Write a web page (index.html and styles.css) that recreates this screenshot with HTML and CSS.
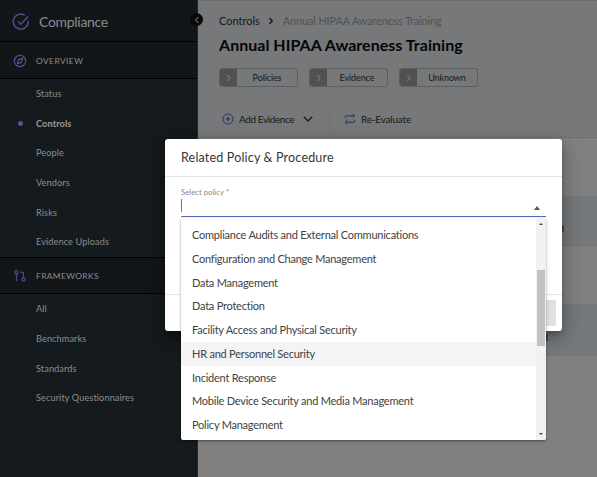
FILE: index.html
```html
<!DOCTYPE html>
<html lang="en">
<head>
<meta charset="utf-8">
<title>Compliance</title>
<link rel="stylesheet" href="styles.css">
</head>
<body>
<div class="app">
  <nav class="sidebar">
    <div class="brand">
      <svg class="brand-icon" viewBox="0 0 18 18"><path d="M16.2 7.6A7.5 7.5 0 1 1 12.8 2.3M6 8.3l2.8 2.9 7.3-7.7"/></svg>
      <span>Compliance</span>
    </div>
    <div class="section">
      <svg class="section-icon" viewBox="0 0 14 14"><circle cx="7" cy="7" r="5.7"/><path d="M9.6 4.4 8.4 8.4 4.4 9.6 5.6 5.6z"/></svg>
      <span>OVERVIEW</span>
    </div>
    <ul class="nav">
      <li>Status</li>
      <li class="active">Controls</li>
      <li>People</li>
      <li>Vendors</li>
      <li>Risks</li>
      <li>Evidence Uploads</li>
    </ul>
    <div class="section frameworks">
      <svg class="section-icon" viewBox="0 0 14 14"><circle cx="3.5" cy="3.2" r="1.6"/><path d="M3.5 4.8v7.4M7.2 3.2h2.2q1 0 1 1v4.6"/><circle cx="10.4" cy="10.5" r="1.6"/></svg>
      <span>FRAMEWORKS</span>
    </div>
    <ul class="nav">
      <li>All</li>
      <li>Benchmarks</li>
      <li>Standards</li>
      <li>Security Questionnaires</li>
    </ul>
  </nav>

  <main class="main">
    <header class="page-head">
      <div class="crumbs">
        <span>Controls</span>
        <svg class="crumb-arrow" viewBox="0 0 6 8"><path d="M1.3 1l3 3-3 3"/></svg>
        <span class="current">Annual HIPAA Awareness Training</span>
      </div>
      <h1>Annual HIPAA Awareness Training</h1>
      <div class="chips">
        <div class="chip"><i><svg viewBox="0 0 6 8"><path d="M1.3 1l3 3-3 3"/></svg></i><span>Policies</span></div>
        <div class="chip"><i><svg viewBox="0 0 6 8"><path d="M1.3 1l3 3-3 3"/></svg></i><span>Evidence</span></div>
        <div class="chip"><i><svg viewBox="0 0 6 8"><path d="M1.3 1l3 3-3 3"/></svg></i><span>Unknown</span></div>
      </div>
    </header>
    <div class="toolbar">
      <div class="tool add">
        <svg class="plus" viewBox="0 0 12 12"><circle cx="6" cy="6" r="5"/><path d="M6 3.6v4.8M3.6 6h4.8"/></svg>
        <span>Add Evidence</span>
        <svg class="caret" viewBox="0 0 10 6"><path d="M.8.8 5 5 9.200.8"/></svg>
      </div>
      <div class="tool again">
        <svg class="repeat" viewBox="0 0 12 12"><path d="M1.300 5.200V4q0-1.200 1.200-1.200h8M8.500.8l2.100 2-2.100 2M10.700 6.800V8q0 1.200-1.200 1.200h-8M3.500 7.200l-2.100 2 2.100 2"/></svg>
        <span>Re-Evaluate</span>
      </div>
    </div>
    <div class="rows">
      <div class="row-a"></div>
      <div class="row-b">d</div>
      <div class="row-c"></div>
      <div class="row-d">d</div>
    </div>
  </main>
</div>

<button class="collapse" aria-label="Collapse"><svg viewBox="0 0 6 8"><path d="M4.500 1l-3 3 3 3"/></svg></button>

<section class="dialog">
  <h2>Related Policy &amp; Procedure</h2>
  <div class="body">
    <label>Select policy *</label>
    <div class="field"><span class="cursor"></span><span class="up"></span></div>
  </div>
  <footer><button class="save" aria-label="Save" disabled></button></footer>
</section>

<div class="menu">
  <ul>
    <li>Compliance Audits and External Communications</li>
    <li>Configuration and Change Management</li>
    <li>Data Management</li>
    <li>Data Protection</li>
    <li>Facility Access and Physical Security</li>
    <li class="hover">HR and Personnel Security</li>
    <li>Incident Response</li>
    <li>Mobile Device Security and Media Management</li>
    <li>Policy Management</li>
  </ul>
  <div class="scroll"><b class="s-up"></b><div class="thumb"></div><b class="s-down"></b></div>
</div>
</body>
</html>
```

FILE: styles.css
```css
* { box-sizing: border-box; }
body { margin: 0; width: 597px; height: 477px; overflow: hidden; font-family: Lato, "Liberation Sans", sans-serif; }
ul { list-style: none; margin: 0; padding: 0; }
svg { fill: none; stroke: currentColor; flex: none; }
.app { display: flex; height: 477px; }

.sidebar { width: 198px; flex: none; background: #141a1d; color: #8b8d8e; border-right: 1px solid #22282b; }
.brand { height: 42px; padding: 2px 0 0 12px; display: flex; align-items: center; gap: 9px; font-size: 14px; letter-spacing: -.3px; background: #121618; border-bottom: 1px solid #000; }
.brand-icon { width: 18px; height: 18px; color: #49528c; stroke-width: 1.5; }
.section { height: 37px; padding: 1px 0 0 13px; display: flex; align-items: center; gap: 9px; font-size: 8.4px; letter-spacing: .45px; background: #121618; border-bottom: 1px solid #000; }
.section-icon { width: 14px; height: 14px; color: #49528c; stroke-width: 1.2; }
.nav li { height: 29.7px; line-height: 30px; padding-left: 36px; font-size: 9.2px; letter-spacing: .09px; }
.nav .active { font-weight: 700; color: #999b9c; display: flex; align-items: center; padding-left: 18px; }
.nav .active::before { content: ""; width: 5px; height: 5px; border-radius: 50%; background: #51588f; margin-right: 13px; }
.frameworks { border-top: 1px solid #000; letter-spacing: .4px; }

.main { flex: 1; background: #808080; border-top: 1px solid #6b6c6e; min-width: 0; }
.page-head { height: 100px; background: #76787a; padding: 11px 0 0 21px; border-bottom: 1px solid #707274; }
.crumbs { display: flex; align-items: center; height: 17px; font-size: 11px; color: #17191b; }
.crumb-arrow { width: 6px; height: 8px; margin: 0 9px 0 8px; stroke-width: 1.4; }
.current { color: #505254; letter-spacing: -.17px; }
h1 { margin: 6px 0 0; font-size: 16px; line-height: 20px; font-weight: 700; letter-spacing: .03px; color: #050607; white-space: nowrap; }
.chips { display: flex; gap: 11px; margin-top: 13px; }
.chip { width: 79px; height: 19px; display: flex; border: 1px solid #5c5e60; border-radius: 3px; font-size: 9px; letter-spacing: -.1px; color: #18191b; overflow: hidden; }
.chip i { width: 17px; background: #505152; color: #898b8d; display: grid; place-items: center; }
.chip svg { width: 6px; height: 8px; }
.chip span { flex: 1; text-align: center; line-height: 17px; }
.toolbar { height: 37px; background: #76787a; display: flex; align-items: center; padding-left: 24px; border-bottom: 1px solid #6c6e70; }
.tool { display: flex; align-items: center; height: 25px; font-size: 10px; color: #17191b; }
.add { width: 108px; border-right: 1px solid #707274; letter-spacing: -.4px; }
.again { letter-spacing: -.2px; }
.plus { width: 12px; height: 12px; color: #293264; margin-right: 5px; }
.caret { width: 10px; height: 6px; margin-left: 9px; stroke-width: 1.4; }
.repeat { width: 12px; height: 12px; color: #293264; margin: 0 5px 0 14px; }
.row-a { height: 58px; }
.row-b { height: 50px; background: #75787a; border-bottom: 1px solid #6f7173; }
.row-c { height: 59px; border-bottom: 1px solid #777; }
.row-d { height: 51px; background: #75787a; }
.row-b, .row-d { padding-top: 26px; font-size: 10px; line-height: 12px; text-align: right; color: #17191b; }
.row-b { padding-right: 33px; }
.row-d { padding-right: 49px; }

.collapse { position: absolute; left: 190px; top: 13px; width: 13px; height: 13px; padding: 0; border: 0; border-radius: 50%; background: #08090a; color: #939597; display: grid; place-items: center; }
.collapse svg { width: 6px; height: 8px; }

.dialog { position: absolute; left: 165px; top: 139px; width: 397px; height: 192px; background: #fff; border-radius: 3px; box-shadow: 0 4px 6px -2px rgba(0,0,0,.3), 0 9px 16px 1px rgba(0,0,0,.15), 0 3px 19px 3px rgba(0,0,0,.12); display: flex; flex-direction: column; }
h2 { margin: 0; height: 38px; padding-left: 16px; line-height: 37px; font-size: 12.5px; font-weight: 400; color: #343638; border-bottom: 1px solid #e4e5e6; letter-spacing: .18px; }
.body { flex: 1; padding: 10px 16px 8px; }
label { display: block; font-size: 7.5px; line-height: 12px; letter-spacing: .12px; color: #858585; }
.field { height: 18px; border-bottom: 1px solid #5b6bbd; display: flex; align-items: center; justify-content: space-between; }
.cursor { width: 1px; height: 13px; margin-bottom: 4px; background: #777; }
.up { border: 3.5px solid transparent; border-top: 0; border-bottom: 4px solid #555; margin: 0 6px 0 0; }
footer { height: 37px; border-top: 1px solid #e6e6e6; padding: 5px 6px; text-align: right; }
.save { width: 70px; height: 26px; border: 0; border-radius: 2px; background: #e0e0e0; }

.menu { position: absolute; left: 181px; top: 218px; width: 365px; height: 222px; background: #fff; border-radius: 2px; box-shadow: 0 1px 2px rgba(0,0,0,.3), 0 1px 4px rgba(0,0,0,.15); display: flex; overflow: hidden; }
.menu ul { flex: 1; padding-top: 5.200px; }
.menu li { height: 23.75px; line-height: 23px; padding-left: 11px; font-size: 11px; letter-spacing: -.23px; color: #404244; white-space: nowrap; }
.menu .hover { background: #f4f4f4; }
.scroll { width: 10px; background: #f1f1f1; display: flex; flex-direction: column; align-items: center; padding: 5px 0; }
.s-up { border: 2px solid transparent; border-top: 0; border-bottom: 2px solid #444; }
.thumb { width: 8px; height: 76px; margin: 45px 0 auto; background: #c1c1c1; }
.s-down { border: 2px solid transparent; border-bottom: 0; border-top: 2px solid #444; }
```
